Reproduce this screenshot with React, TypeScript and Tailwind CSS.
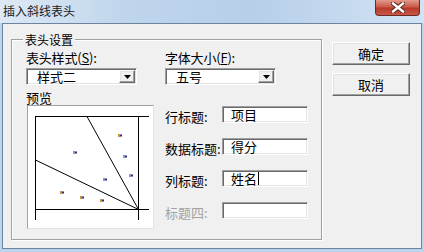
import React from 'react';

const sunken =
  'border border-t-[#a0a0a0] border-l-[#a0a0a0] border-r-white border-b-white shadow-[inset_1px_1px_0_#696969,inset_-1px_-1px_0_#e3e3e3]';
const raised =
  'border border-t-white border-l-white border-r-[#696969] border-b-[#696969] shadow-[inset_-1px_-1px_0_#a0a0a0,inset_1px_1px_0_#e3e3e3]';

function Combo({ value }: { value: string }) {
  return (
    <div className={`w-[111px] h-[17px] bg-white flex items-center ${sunken}`}>
      <span className="flex-1 pl-[10px] text-[13px] leading-[13px] text-black">{value}</span>
      <div className={`w-[16px] h-[13px] mr-[1px] bg-[#f0f0f0] flex items-center justify-center ${raised}`}>
        <svg width="7" height="4" viewBox="0 0 7 4">
          <path d="M0 0H7L3.5 4Z" fill="#000" />
        </svg>
      </div>
    </div>
  );
}

function Field({ label, value, disabled, caret }: { label: string; value?: string; disabled?: boolean; caret?: boolean }) {
  return (
    <div className="flex items-center h-[17px]">
      <span
        className={`w-[57px] pt-[3px] whitespace-nowrap text-[13px] leading-[15px] ${disabled ? 'text-[#a3a3a3]' : 'text-black'}`}
      >
        {label}
      </span>
      <div className={`w-[86px] h-[17px] bg-white flex items-center pl-[8px] ${sunken}`}>
        <span className="text-[13px] leading-[13px] text-black">{value}</span>
        {caret && <span className="w-px h-[13px] bg-black ml-[1px]" />}
      </div>
    </div>
  );
}

function Dot({ x, y }: { x: number; y: number }) {
  return (
    <g>
      <rect x={x} y={y} width="4" height="3" fill="#8a92c0" />
      <rect x={x} y={y} width="1" height="3" fill="#d8902c" />
      <rect x={x + 2} y={y + 1} width="2" height="1" fill="#2a2f6a" />
    </g>
  );
}

const dots = [
  [46, 46], [91, 29], [96, 50], [102, 69], [76, 73], [33, 86], [53, 91], [73, 94],
];

function Preview() {
  return (
    <div className="ml-[1px] w-[127px] h-[124px] bg-white border border-t-[#a0a0a0] border-l-[#a0a0a0] border-r-[#e3e3e3] border-b-[#e3e3e3]">
      <svg width="125" height="122" viewBox="1 1 125 122" shapeRendering="crispEdges">
        <line x1="8" y1="11.5" x2="122" y2="11.5" stroke="#000" />
        <line x1="8" y1="104.5" x2="122" y2="104.5" stroke="#000" />
        <line x1="8.5" y1="11" x2="8.5" y2="115" stroke="#000" />
        <line x1="111.5" y1="11" x2="111.5" y2="115" stroke="#000" />
        <g shapeRendering="auto">
          <line x1="111.5" y1="104.5" x2="60" y2="11.5" stroke="#000" />
          <line x1="111.5" y1="104.5" x2="8.5" y2="55" stroke="#000" />
        </g>
        {dots.map(([x, y], i) => (
          <Dot key={i} x={x} y={y} />
        ))}
      </svg>
    </div>
  );
}

export default function App() {
  return (
    <div className="w-[424px] h-[252px] overflow-hidden bg-[#bcd4ec] font-['Noto_Sans_CJK_SC',sans-serif] text-black">
      {/* Title bar */}
      <div className="relative h-[23px] flex items-center pl-[3px] bg-[linear-gradient(90deg,#dde9f5_0%,#bfd5ec_30%,#b7cfe9_60%,#d2e3f4_100%)]">
        <span className="text-[12px] leading-[13px] text-[#1a1a1a] mt-[-2px]">插入斜线表头</span>
        <div className="absolute right-[4px] top-0 w-[45px] h-[16px] rounded-b-[4px] border border-t-0 border-[#6b2a22] bg-[linear-gradient(180deg,#e29a8c_0%,#cc5a4a_45%,#b8392a_55%,#c8584a_100%)] flex items-center justify-center">
          <svg width="14" height="11" viewBox="0 0 14 11">
            <path d="M2 1.5L12 9.5M12 1.5L2 9.5" stroke="#5a2820" strokeWidth="4.5" strokeLinecap="square" />
            <path d="M2 1.5L12 9.5M12 1.5L2 9.5" stroke="#fff" strokeWidth="2.4" strokeLinecap="square" />
          </svg>
        </div>
      </div>

      {/* Client area */}
      <div className="ml-[2px] w-[420px] h-[226px] bg-[#f0f0f0] border border-[#6d84a0] flex items-start">
        <fieldset className="ml-[8px] mt-[9px] w-[311px] h-[207px] p-0 border border-[#a0a0a0] shadow-[inset_1px_1px_0_#fff,1px_1px_0_#fff]">
          <legend className="ml-[11px] px-[2px] text-[12px] leading-[13px] bg-[#f0f0f0]">表头设置</legend>
          <div className="flex pl-[14px] pt-[4px]">
            {/* left column */}
            <div className="w-[127px] flex flex-col">
              <div className="h-[15px] text-[13px] leading-[15px] tracking-[-0.2px]">
                表头样式(<u>S</u>):
              </div>
              <div className="mt-[3px]">
                <Combo value="样式二" />
              </div>
              <div className="mt-[5px] h-[15px] text-[13px] leading-[15px]">预览</div>
              <Preview />
            </div>

            {/* right column */}
            <div className="ml-[12px] flex flex-col">
              <div className="h-[15px] text-[13px] leading-[15px] tracking-[-0.2px]">
                字体大小(<u>F</u>):
              </div>
              <div className="mt-[3px]">
                <Combo value="五号" />
              </div>
              <div className="mt-[21px] flex flex-col gap-[15px]">
                <Field label="行标题:" value="项目" />
                <Field label="数据标题:" value="得分" />
                <Field label="列标题:" value="姓名" caret />
                <Field label="标题四:" disabled />
              </div>
            </div>
          </div>
        </fieldset>

        <div className="ml-[10px] mt-[18px] flex flex-col gap-[8px]">
          <button className={`w-[78px] h-[23px] bg-[#f0f0f0] text-[13px] leading-[13px] ${raised}`}>确定</button>
          <button className={`w-[78px] h-[23px] bg-[#f0f0f0] text-[13px] leading-[13px] ${raised}`}>取消</button>
        </div>
      </div>
    </div>
  );
}
